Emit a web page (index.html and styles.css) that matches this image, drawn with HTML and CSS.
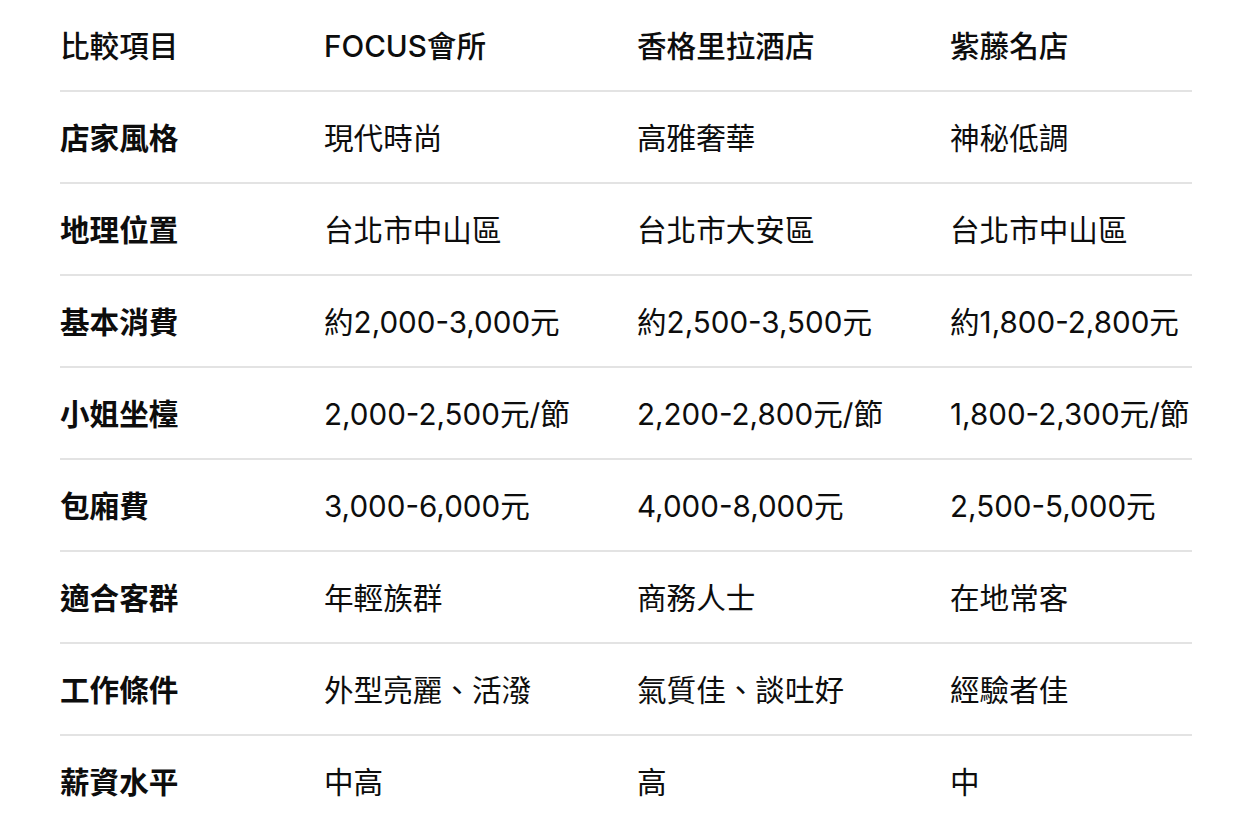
FILE: index.html
```html
<!DOCTYPE html>
<html lang="zh-Hant">
<head>
<meta charset="utf-8">
<link rel="stylesheet" href="styles.css">
</head>
<body>
<table class="cmp">
  <colgroup>
    <col class="c1"><col class="c2"><col class="c3"><col class="c4">
  </colgroup>
  <thead>
    <tr><th>比較項目</th><th>FOCUS會所</th><th>香格里拉酒店</th><th>紫藤名店</th></tr>
  </thead>
  <tbody>
    <tr><td class="k">店家風格</td><td>現代時尚</td><td>高雅奢華</td><td>神秘低調</td></tr>
    <tr><td class="k">地理位置</td><td>台北市中山區</td><td>台北市大安區</td><td>台北市中山區</td></tr>
    <tr><td class="k">基本消費</td><td>約2,000-3,000元</td><td>約2,500-3,500元</td><td>約1,800-2,800元</td></tr>
    <tr><td class="k">小姐坐檯</td><td>2,000-2,500元/節</td><td>2,200-2,800元/節</td><td>1,800-2,300元/節</td></tr>
    <tr><td class="k">包廂費</td><td>3,000-6,000元</td><td>4,000-8,000元</td><td>2,500-5,000元</td></tr>
    <tr><td class="k">適合客群</td><td>年輕族群</td><td>商務人士</td><td>在地常客</td></tr>
    <tr><td class="k">工作條件</td><td>外型亮麗、活潑</td><td>氣質佳、談吐好</td><td>經驗者佳</td></tr>
    <tr><td class="k">薪資水平</td><td>中高</td><td>高</td><td>中</td></tr>
  </tbody>
</table>
</body>
</html>
```
FILE: styles.css
```css
html, body {
  margin: 0;
  padding: 0;
  background: #ffffff;
}
body {
  font-family: "Inter", "Noto Sans CJK TC", sans-serif;
  color: #0d0d0d;
  font-size: 29.6px;
  overflow: hidden;
}
.cmp {
  margin-left: 60px;
  border-collapse: collapse;
  table-layout: fixed;
  width: 1132px;
}
.c1 { width: 264px; }
.c2 { width: 313px; }
.c3 { width: 313px; }
.c4 { width: 242px; }
.cmp th, .cmp td {
  padding: 3px 0 0 0;
  height: 87px;
  text-align: left;
  vertical-align: middle;
  white-space: nowrap;
  line-height: 1.2;
}
.cmp th {
  font-weight: 500;
  border-bottom: 2px solid #e3e3e3;
}
.cmp tbody tr td {
  font-weight: 400;
  border-bottom: 2px solid #e3e3e3;
}
.cmp tbody tr:last-child td {
  border-bottom: none;
}
.cmp td.k {
  font-weight: 700;
}
```
